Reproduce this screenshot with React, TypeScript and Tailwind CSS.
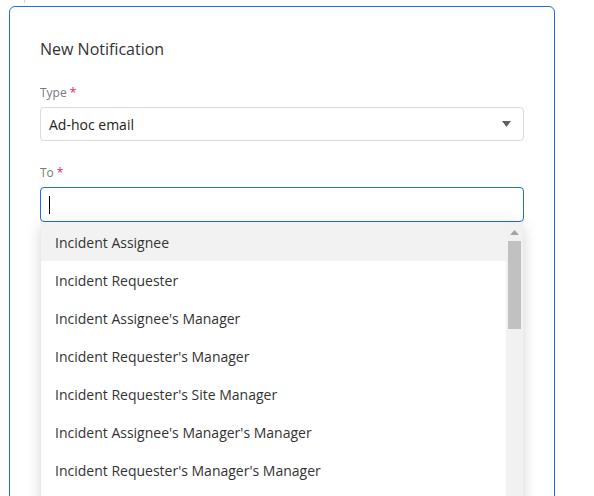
import React from 'react';

const options = [
  'Incident Assignee',
  'Incident Requester',
  "Incident Assignee's Manager",
  "Incident Requester's Manager",
  "Incident Requester's Site Manager",
  "Incident Assignee's Manager's Manager",
  "Incident Requester's Manager's Manager",
];

function Label({ text }: { text: string }) {
  return (
    <div className="text-[12px] leading-[16px] text-[#7a7a7a]">
      {text}
      <span className="ml-[3px] text-[#e5195e]">*</span>
    </div>
  );
}

export default function App() {
  return (
    <div className="relative min-h-screen bg-white font-['Open_Sans',sans-serif] overflow-hidden">
      {/* faint edge of a panel above */}
      <div className="absolute left-[24px] top-0 h-[3px] w-px bg-[#d6d6d6]" />

      <div className="ml-[9px] mt-[6px] w-[546px] h-[560px] border border-[#1f6be6] rounded-[6px] px-[30px] pt-[31px]">
        <h2 className="text-[16px] leading-[22px] text-[#333]">New Notification</h2>

        {/* Type */}
        <div className="mt-[25px]">
          <Label text="Type" />
          <div className="mt-[6px] h-[34px] border border-[#dcdcdc] rounded-[4px] flex items-center justify-between pl-[8px] pr-[12px] text-[14px] text-[#222]">
            <span>Ad-hoc email</span>
            <svg width="9" height="6" viewBox="0 0 9 6">
              <path d="M0 0h9L4.5 6z" fill="#616161" />
            </svg>
          </div>
        </div>

        {/* To */}
        <div className="mt-[24px]">
          <Label text="To" />
          <div className="relative mt-[6px]">
            <div className="h-[35px] border border-[#1f6be6] rounded-[4px] flex items-center pl-[8px]">
              <div className="w-px h-[18px] bg-black" />
            </div>

            <div className="absolute left-[1px] right-[1px] top-[36px] h-[320px] bg-white shadow-[0_4px_14px_rgba(0,0,0,0.18)] flex">
              <div className="flex-1 min-w-0">
                {options.map((o, i) => (
                  <div
                    key={o}
                    className={`h-[38px] flex items-center pl-[14px] text-[14px] text-[#333] whitespace-nowrap ${
                      i === 0 ? 'bg-[#f2f2f2]' : ''
                    }`}
                  >
                    {o}
                  </div>
                ))}
              </div>
              {/* scrollbar */}
              <div className="w-[17px] bg-[#f1f1f1] flex flex-col items-center">
                <svg className="mt-[7px]" width="9" height="5" viewBox="0 0 9 5">
                  <path d="M0 5h9L4.5 0z" fill="#a3a3a3" />
                </svg>
                <div className="mt-[6px] w-[13px] h-[88px] bg-[#c1c1c1]" />
              </div>
            </div>
          </div>
        </div>
      </div>
    </div>
  );
}
